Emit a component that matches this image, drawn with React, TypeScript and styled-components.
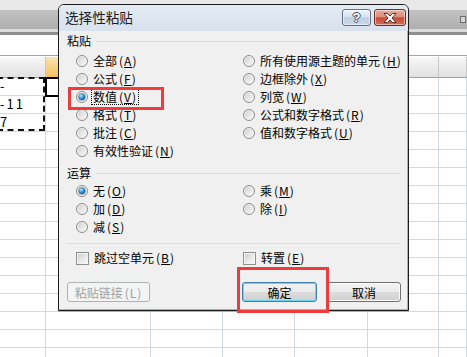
import React from "react";
import styled, { createGlobalStyle, css } from "styled-components";

const GlobalStyle = createGlobalStyle`
  html, body { margin: 0; padding: 0; background: #fff; }
  body { font-family: "Noto Sans CJK SC", "Noto Sans", sans-serif; }
`;

type Opt = { label: string; key: string; checked?: boolean; focus?: boolean };

const pasteLeft: Opt[] = [
  { label: "全部", key: "A" },
  { label: "公式", key: "F" },
  { label: "数值", key: "V", checked: true, focus: true },
  { label: "格式", key: "T" },
  { label: "批注", key: "C" },
  { label: "有效性验证", key: "N" },
];
const pasteRight: Opt[] = [
  { label: "所有使用源主题的单元", key: "H" },
  { label: "边框除外", key: "X" },
  { label: "列宽", key: "W" },
  { label: "公式和数字格式", key: "R" },
  { label: "值和数字格式", key: "U" },
];
const opLeft: Opt[] = [
  { label: "无", key: "O", checked: true },
  { label: "加", key: "D" },
  { label: "减", key: "S" },
];
const opRight: Opt[] = [
  { label: "乘", key: "M" },
  { label: "除", key: "I" },
];

const cellText = ["-", "-11", "7"];

// sheet behind the dialog
const COLS = "46px 105px 72px 72px 73px 71px 1fr";

const Screen = styled.div`
  position: relative;
  width: 467px;
  height: 357px;
  overflow: hidden;
  background: #fff;
`;

const TopStrip = styled.div`
  height: 10px;
  background: #e9e9e9;
`;

const Toolbar = styled.div`
  height: 19px;
  display: flex;
  justify-content: flex-end;
  align-items: center;
  padding-right: 1px;
  background: linear-gradient(#c3c3c3, #aeaeae);
`;

const ToolbarEdge = styled.div`
  height: 6px;
  background: linear-gradient(#dadada 0 3px, #8f8f8f 3px 6px);
`;

const FormulaArea = styled.div`
  height: 20px;
  border-bottom: 1px solid #a3a3a3;
  margin-bottom: 1px;
  background: #fff;
`;

const GridRow = styled.div<{ $head?: boolean }>`
  display: grid;
  grid-template-columns: ${COLS};
  height: ${(p) => (p.$head ? 21 : 18)}px;
`;

const HeadCell = styled.div<{ $selected?: boolean }>`
  box-sizing: border-box;
  border-right: 1px solid #c6c6c6;
  border-bottom: 1px solid #a2a2a2;
  background: ${(p) =>
    p.$selected
      ? "linear-gradient(#fbe3ad, #f3c164)"
      : "linear-gradient(#f7f7f7, #e1e1e1)"};
`;

const Cell = styled.div<{ $active?: boolean }>`
  box-sizing: border-box;
  border-right: 1px solid #d0d7e5;
  border-bottom: 1px solid #d0d7e5;
  font-size: 13px;
  line-height: 16px;
  letter-spacing: 2px;
  color: #000;
  white-space: nowrap;
  overflow: hidden;
  ${(p) =>
    p.$active &&
    css`
      outline: 2px solid #000;
      outline-offset: -1px;
      position: relative;
      z-index: 1;
    `}
`;

const Marquee = styled.div`
  position: absolute;
  left: -3px;
  top: 77px;
  width: 48px;
  height: 54px;
  box-sizing: border-box;
  border: 2px dashed #111;
`;

// dialog
const Dialog = styled.div`
  position: absolute;
  left: 58px;
  top: 4px;
  width: 351px;
  height: 307px;
  box-sizing: border-box;
  border: 1px solid #1c1c1c;
  border-radius: 6px 6px 0 0;
  background: #f0f0f0;
  display: flex;
  flex-direction: column;
  box-shadow: inset -1px -1px 0 #63c9ee, 0 1px 0 #63c9ee;
  color: #000;
  font-size: 12px;
  z-index: 2;
`;

const TitleBar = styled.div`
  height: 26px;
  display: flex;
  justify-content: space-between;
  align-items: flex-start;
  padding: 0 2px 0 6px;
  border-radius: 5px 5px 0 0;
  background: linear-gradient(#e4ebf3, #d8e2ed);
`;

const Title = styled.span`
  font-size: 13.6px;
  line-height: 24px;
  color: #1b1b1b;
`;

const CaptionButtons = styled.div`
  display: flex;
  gap: 3px;
  margin-top: 4px;
`;

const CaptionButton = styled.div<{ $close?: boolean }>`
  width: ${(p) => (p.$close ? 32 : 29)}px;
  height: 17px;
  box-sizing: border-box;
  border-radius: 3px;
  display: flex;
  align-items: center;
  justify-content: center;
  border: 1px solid ${(p) => (p.$close ? "#6e2d22" : "#5f708a")};
  background: ${(p) =>
    p.$close
      ? "linear-gradient(#e9ad9e 0%, #dd8d7b 45%, #c44d39 52%, #d06c57 100%)"
      : "linear-gradient(#eef3f9 0%, #d8e2ee 45%, #bfcfe2 52%, #cad8e8 100%)"};
  box-shadow: inset 0 0 0 1px rgba(255, 255, 255, 0.5);
`;

const HelpGlyph = styled.span`
  font-family: "Liberation Sans", Arial, sans-serif;
  font-weight: bold;
  font-size: 13px;
  line-height: 13px;
  color: #fff;
  text-shadow: 1px 0 0 #3d4b5f, -1px 0 0 #3d4b5f, 0 1px 0 #3d4b5f, 0 -1px 0 #3d4b5f;
`;

const Body = styled.div`
  flex: 1;
  display: flex;
  flex-direction: column;
  padding: 0 7px 0 8px;
`;

const Legend = styled.div<{ $gap: number }>`
  height: 18px;
  margin-top: ${(p) => p.$gap}px;
  display: flex;
  align-items: center;
  gap: 5px;
  line-height: 18px;
  &::after {
    content: "";
    flex: 1;
    border-top: 1px solid #d5dfe5;
  }
`;

const Columns = styled.div<{ $gap?: number }>`
  display: grid;
  grid-template-columns: 167px 1fr;
  margin: ${(p) => p.$gap ?? 0}px 0 0 9px;
`;

const Column = styled.div`
  display: flex;
  flex-direction: column;
`;

const Option = styled.div`
  height: 18px;
  display: flex;
  align-items: center;
  gap: 4px;
  white-space: nowrap;
`;

const Radio = styled.span<{ $checked?: boolean }>`
  width: 12px;
  height: 12px;
  flex: none;
  box-sizing: border-box;
  border-radius: 50%;
  border: 1px solid #8d8d8d;
  display: grid;
  place-items: center;
  background: linear-gradient(135deg, #c9c9c9 0%, #e4e4e4 45%, #fbfbfb 100%);
  box-shadow: inset 0 0 0 1px #f3f3f3;
  &::after {
    content: "";
    display: ${(p) => (p.$checked ? "block" : "none")};
    width: 6px;
    height: 6px;
    border-radius: 50%;
    background: radial-gradient(circle at 35% 30%, #b6ecff 0, #2a8fd0 45%, #0b3f74 100%);
    box-shadow: 0 0 0 0.5px #1d3d5f;
  }
`;

const Check = styled.span`
  width: 13px;
  height: 13px;
  flex: none;
  box-sizing: border-box;
  border: 1px solid #8e8f8f;
  background: linear-gradient(135deg, #c8c8c8 0%, #e3e3e3 45%, #fafafa 100%);
  box-shadow: inset 0 0 0 1px #f4f4f4;
`;

const Label = styled.span<{ $focus?: boolean }>`
  line-height: 14px;
  padding: 0 1px;
  ${(p) =>
    p.$focus &&
    css`
      outline: 1px dotted #000;
    `}
`;

const Key = styled.span`
  margin-left: 2px;
  letter-spacing: 1px;
  u {
    text-underline-offset: 1px;
  }
`;

const Rule = styled.div<{ $gap: number }>`
  margin-top: ${(p) => p.$gap}px;
  border-top: 1px solid #d5dfe5;
`;

const ButtonRow = styled.div`
  margin-top: 15px;
  display: flex;
  justify-content: space-between;
`;

const ButtonGroup = styled.div`
  display: flex;
  gap: 10px;
`;

const Button = styled.div<{ $w: number; $default?: boolean; $disabled?: boolean }>`
  width: ${(p) => p.$w}px;
  height: 20px;
  box-sizing: border-box;
  border-radius: 3px;
  display: flex;
  align-items: center;
  justify-content: center;
  font-size: 12px;
  border: 1px solid #707070;
  background: linear-gradient(#f2f2f2 0%, #ebebeb 50%, #dddddd 51%, #cfcfcf 100%);
  box-shadow: inset 0 0 0 1px #fcfcfc;
  ${(p) =>
    p.$default &&
    css`
      border-color: #3c7fb1;
      box-shadow: inset 0 0 0 1px #6fd3f6;
    `}
  ${(p) =>
    p.$disabled &&
    css`
      border-color: #adb2b5;
      background: #f4f4f4;
      box-shadow: none;
      color: #a0a0a0;
    `}
`;

const Mark = styled.div<{ $x: number; $y: number; $w: number; $h: number }>`
  position: absolute;
  left: ${(p) => p.$x}px;
  top: ${(p) => p.$y}px;
  width: ${(p) => p.$w}px;
  height: ${(p) => p.$h}px;
  box-sizing: border-box;
  border: 3px solid #f03b3b;
  z-index: 3;
`;

const OptionItem = ({ o }: { o: Opt }) => (
  <Option>
    <Radio $checked={o.checked} />
    <Label $focus={o.focus}>
      {o.label}
      <Key>
        (<u>{o.key}</u>)
      </Key>
    </Label>
  </Option>
);

const CheckItem = ({ label, k }: { label: string; k: string }) => (
  <Option>
    <Check />
    <Label>
      {label}
      <Key>
        (<u>{k}</u>)
      </Key>
    </Label>
  </Option>
);

const Sheet = () => (
  <>
    <TopStrip />
    <Toolbar>
      <svg width="6" height="7" viewBox="0 0 6 7">
        <rect x="0.5" y="0.5" width="5" height="6" fill="#d6d6d6" stroke="#6d6d6d" />
      </svg>
    </Toolbar>
    <ToolbarEdge />
    <FormulaArea />
    <GridRow $head>
      {Array.from({ length: 7 }).map((_, i) => (
        <HeadCell key={i} $selected={i === 1} />
      ))}
    </GridRow>
    {Array.from({ length: 16 }).map((_, r) => (
      <GridRow key={r}>
        {Array.from({ length: 7 }).map((_, c) => (
          <Cell key={c} $active={r === 0 && c === 1}>
            {c === 0 ? cellText[r] : null}
          </Cell>
        ))}
      </GridRow>
    ))}
  </>
);

export default function App() {
  return (
    <>
      <GlobalStyle />
      <Screen>
        <Sheet />
        <Marquee />
        <Dialog>
          <TitleBar>
            <Title>选择性粘贴</Title>
            <CaptionButtons>
              <CaptionButton>
                <HelpGlyph>?</HelpGlyph>
              </CaptionButton>
              <CaptionButton $close>
                <svg width="14" height="10" viewBox="0 0 14 10">
                  <polygon
                    points="1,0.5 4.5,0.5 7,3 9.5,0.5 13,0.5 9,5 13,9.5 9.5,9.5 7,7 4.5,9.5 1,9.5 5,5"
                    fill="#fff"
                    stroke="#4e2019"
                    strokeWidth="0.9"
                    strokeLinejoin="round"
                  />
                </svg>
              </CaptionButton>
            </CaptionButtons>
          </TitleBar>
          <Body>
            <Legend $gap={1}>粘贴</Legend>
            <Columns $gap={2}>
              <Column>
                {pasteLeft.map((o) => (
                  <OptionItem key={o.key} o={o} />
                ))}
              </Column>
              <Column>
                {pasteRight.map((o) => (
                  <OptionItem key={o.key} o={o} />
                ))}
              </Column>
            </Columns>
            <Legend $gap={4}>运算</Legend>
            <Columns>
              <Column>
                {opLeft.map((o) => (
                  <OptionItem key={o.key} o={o} />
                ))}
              </Column>
              <Column>
                {opRight.map((o) => (
                  <OptionItem key={o.key} o={o} />
                ))}
              </Column>
            </Columns>
            <Rule $gap={7} />
            <Columns $gap={5}>
              <CheckItem label="跳过空单元" k="B" />
              <CheckItem label="转置" k="E" />
            </Columns>
            <ButtonRow>
              <Button $w={83} $disabled>
                粘贴链接
                <Key>(L)</Key>
              </Button>
              <ButtonGroup>
                <Button $w={75} $default>
                  确定
                </Button>
                <Button $w={74}>取消</Button>
              </ButtonGroup>
            </ButtonRow>
          </Body>
        </Dialog>
        <Mark $x={68} $y={87} $w={96} $h={23} />
        <Mark $x={237} $y={267} $w={92} $h={46} />
      </Screen>
    </>
  );
}
